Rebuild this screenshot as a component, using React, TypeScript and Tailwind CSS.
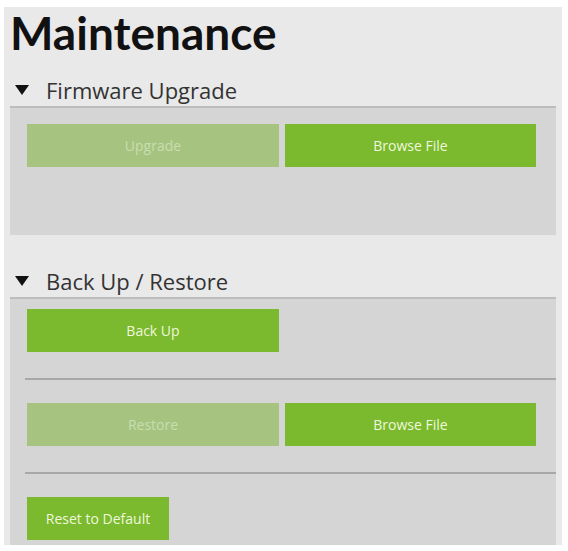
import React from "react";

const font = { fontFamily: '"Open Sans", "Noto Sans", sans-serif' };

function Btn({ label, disabled, w }: { label: string; disabled?: boolean; w: string }) {
  return (
    <div
      className={`${w} h-[43px] flex items-center justify-center text-[14px] ${
        disabled ? "bg-[#a6c47f] text-[#c9dcb2]" : "bg-[#7bb92e] text-[#eef8dc]"
      }`}
    >
      {label}
    </div>
  );
}

function Header({ label }: { label: string }) {
  return (
    <div className="flex items-center h-[30px] pl-[5px] text-[22px] text-[#333]">
      <svg width="14" height="10" viewBox="0 0 14 10" className="mr-[17px]">
        <polygon points="0,0 14,0 7,10" fill="#111" />
      </svg>
      <span>{label}</span>
    </div>
  );
}

export default function App() {
  return (
    <div className="w-[568px] h-[551px] bg-white pt-[7px] pl-[4px] pr-[6px] overflow-hidden" style={font}>
      <div className="bg-[#e9e9e9] h-[538px] pl-[6px] pr-[6px] flex flex-col">
        <div
          className="h-[68px] text-[46px] font-bold leading-none text-[#111] pt-[3px]"
          style={{ fontFamily: 'Lato, "Open Sans", sans-serif' }}
        >
          Maintenance
        </div>
        <Header label="Firmware Upgrade" />
        <div className="mt-[1px] h-[129px] bg-[#d5d5d5] border-t-2 border-[#bdbdbd] pl-[17px] pt-[16px] flex gap-[6px]">
          <Btn label="Upgrade" disabled w="w-[252px]" />
          <Btn label="Browse File" w="w-[251px]" />
        </div>
        <div className="h-[31px]" />
        <Header label="Back Up / Restore" />
        <div className="mt-[1px] flex-1 bg-[#d5d5d5] border-t-2 border-[#bdbdbd] flex flex-col">
          <div className="pl-[17px] pt-[10px] pb-[26px]">
            <Btn label="Back Up" w="w-[252px]" />
          </div>
          <div className="ml-[15px] h-[2px] bg-[#a8a8a8]" />
          <div className="pl-[17px] pt-[23px] pb-[26px] flex gap-[6px]">
            <Btn label="Restore" disabled w="w-[252px]" />
            <Btn label="Browse File" w="w-[251px]" />
          </div>
          <div className="ml-[15px] h-[2px] bg-[#a8a8a8]" />
          <div className="pl-[17px] pt-[23px]">
            <Btn label="Reset to Default" w="w-[142px]" />
          </div>
        </div>
      </div>
    </div>
  );
}
